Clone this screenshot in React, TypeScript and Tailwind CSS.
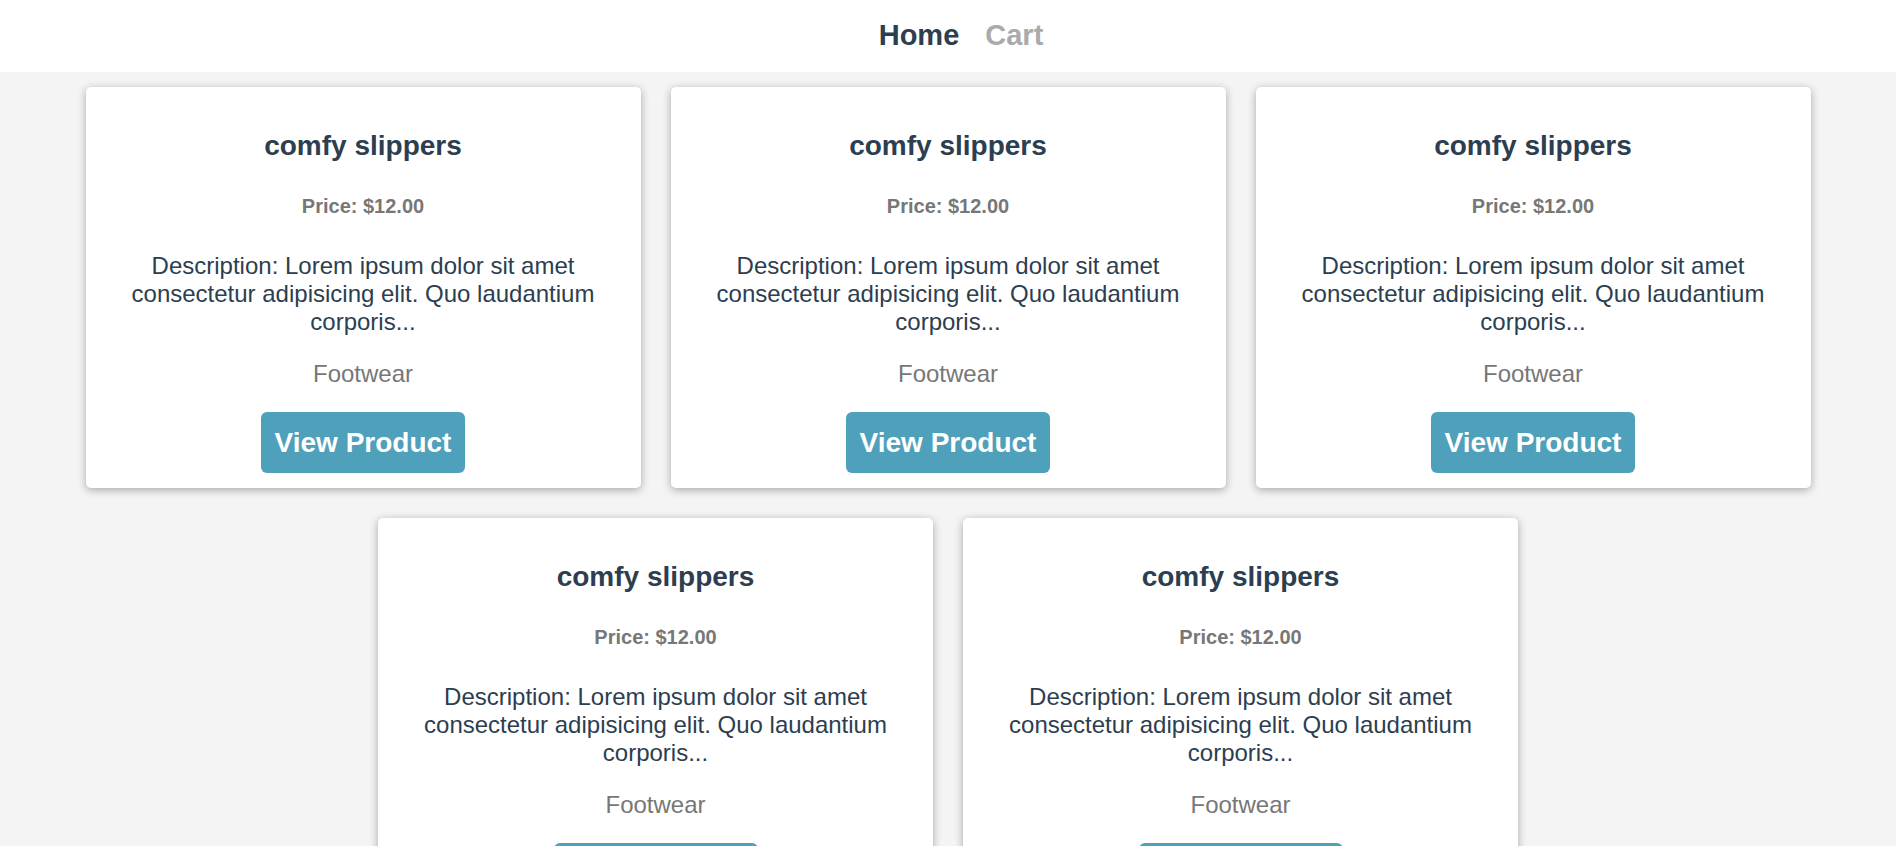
import React from "react";

type Product = {
  id: number;
  name: string;
  price: string;
  description: string;
  category: string;
};

const products: Product[] = Array.from({ length: 5 }, (_, i) => ({
  id: i + 1,
  name: "comfy slippers",
  price: "$12.00",
  description:
    "Lorem ipsum dolor sit amet consectetur adipisicing elit. Quo laudantium corporis...",
  category: "Footwear",
}));

function ProductCard({ product }: { product: Product }) {
  return (
    <div className="m-[15px] flex w-[555px] flex-col items-center rounded-[5px] bg-white px-5 pt-[43px] pb-[15px] text-center shadow-[0_2px_8px_rgba(0,0,0,0.32)]">
      <h2 className="text-[28px] leading-[32px] font-bold text-[#2c3e50]">{product.name}</h2>
      <p className="mt-[33px] text-[20px] leading-[23px] font-bold text-[#777]">Price: {product.price}</p>
      <p className="mt-[34px] text-[24px] leading-[28px] text-[#2c3e50]">Description: {product.description}</p>
      <p className="mt-[24px] text-[24px] leading-[28px] text-[#777]">{product.category}</p>
      <button
        type="button"
        className="mt-[24px] flex h-[61px] w-[204px] items-center justify-center rounded-[6px] bg-[#4fa0bb] text-[28px] leading-[32px] font-bold text-white"
      >
        View Product
      </button>
    </div>
  );
}

export default function App() {
  return (
    <div className="min-h-screen bg-[#f4f4f4] font-['Liberation_Sans',Arial,sans-serif]">
      <nav className="flex h-[72px] justify-center gap-[26px] bg-white pt-[19px] pl-[26px] text-[29px] leading-[33px] font-bold">
        <a href="#" className="text-[#2c3e50]">
          Home
        </a>
        <a href="#" className="text-[#aaa]">
          Cart
        </a>
      </nav>
      <div className="flex flex-wrap justify-center">
        {products.map((p) => (
          <ProductCard key={p.id} product={p} />
        ))}
      </div>
    </div>
  );
}
